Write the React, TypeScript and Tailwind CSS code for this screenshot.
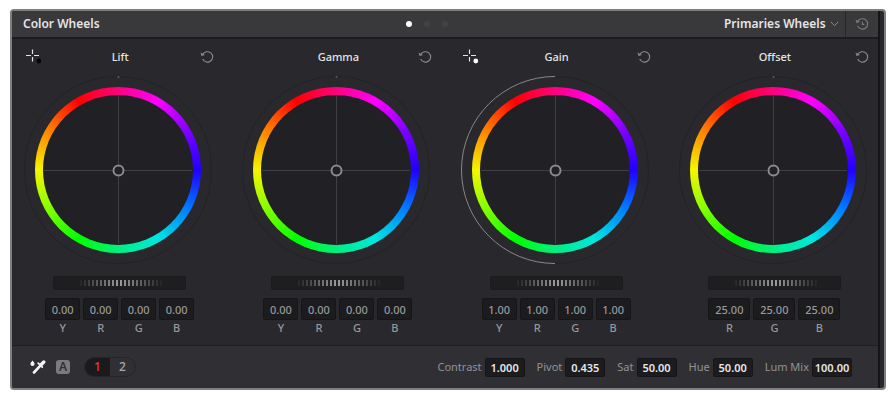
import { useState } from "react";

type Channel = { label: string; value: string };
type Wheel = {
  name: string;
  picker?: "black" | "white";
  arc?: boolean;
  channels: Channel[];
};

const yrgb = (value: string): Channel[] => ["Y", "R", "G", "B"].map((label) => ({ label, value }));

const wheels: Wheel[] = [
  { name: "Lift", picker: "black", channels: yrgb("0.00") },
  { name: "Gamma", channels: yrgb("0.00") },
  { name: "Gain", picker: "white", arc: true, channels: yrgb("1.00") },
  { name: "Offset", channels: ["R", "G", "B"].map((label) => ({ label, value: "25.00" })) },
];

const adjustments = [
  { label: "Contrast", value: "1.000" },
  { label: "Pivot", value: "0.435" },
  { label: "Sat", value: "50.00" },
  { label: "Hue", value: "50.00" },
  { label: "Lum Mix", value: "100.00" },
];

function ResetIcon({ dot = false }: { dot?: boolean }) {
  return (
    <svg width="14" height="14" viewBox="0 0 14 14" fill="none" stroke="currentColor" strokeWidth="1.1">
      <path d="M2.8 4.6A5.2 5.2 0 1 1 2.7 9" />
      <path d="M0.5 2.4 1.5 6 5 5Z" fill="currentColor" stroke="none" />
      {dot && <path d="M7.4 4.8V7.4H9.4" />}
    </svg>
  );
}

function PickerIcon({ tone }: { tone: "black" | "white" }) {
  return (
    <svg width="16" height="16" viewBox="0 0 16 16" fill="none">
      <path d="M6.5 0.5V5M6.5 8V12.5M0 6.5H5M8 6.5H13" stroke="#e4e4e6" strokeWidth="1.2" />
      <circle cx="12.8" cy="12" r="2.4" fill={tone === "black" ? "#050505" : "#ffffff"} />
    </svg>
  );
}

function EyedropperIcon() {
  return (
    <svg width="16" height="14" viewBox="0 0 16 14" fill="none">
      <path d="M2.5 0.5C3.5 1.8 4.6 2.8 4.6 4A2.1 2.1 0 0 1 0.4 4C0.4 2.8 1.5 1.8 2.5 0.5Z" fill="#f4f4f4" />
      <path d="M4 12.5 10.3 5.7" stroke="#f4f4f4" strokeWidth="2.6" strokeLinecap="round" />
      <path d="M8.2 3.2 12.3 7.2" stroke="#f4f4f4" strokeWidth="1.8" strokeLinecap="round" />
      <path d="M11.3 4.5 13.8 2" stroke="#f4f4f4" strokeWidth="3.4" strokeLinecap="round" />
    </svg>
  );
}

function WheelDial({ arc }: { arc?: boolean }) {
  return (
    <div className="relative grid size-[188px] place-items-center rounded-full border border-[#232327]">
      <div className="grid size-[166px] place-items-center rounded-full bg-[conic-gradient(#ff0080,#ff00ff_30deg,#8000ff_60deg,#2000ff_90deg,#0080ff_120deg,#00e6e0_150deg,#00f080_180deg,#00ff00_210deg,#80ff00_240deg,#f5f500_270deg,#ff8000_300deg,#ff0000_330deg,#ff0080)]">
        <div className="size-[150px] rounded-full bg-[#212125]" />
      </div>
      <svg className="absolute -inset-px" width="188" height="188" viewBox="0 0 188 188" fill="none">
        <path d="M94.5 20V88M94.5 100V168M20 94.5H88M100 94.5H168" stroke="#404044" />
        <circle cx="94.5" cy="94.5" r="5" stroke="#8b8b8d" strokeWidth="2" />
        {arc ? (
          <path d="M94 0.5A93.5 93.5 0 0 0 94 187.5" stroke="#8a8a8c" />
        ) : (
          <circle cx="94.5" cy="1" r="1" fill="#705457" />
        )}
      </svg>
    </div>
  );
}

function ValueInput({ id, value, className }: { id: string; value: string; className: string }) {
  const [text, setText] = useState(value);
  return (
    <input
      id={id}
      type="text"
      value={text}
      onChange={(event) => setText(event.target.value)}
      className={`rounded-xs border border-[#161618] bg-[#1c1c1e] text-center text-[11px] outline-none ${className}`}
    />
  );
}

function WheelColumn({ wheel }: { wheel: Wheel }) {
  const wide = wheel.channels.length === 3;
  return (
    <section className="flex min-w-0 flex-col items-center">
      <header className="grid w-48 grid-cols-3 items-center pt-2 pl-1">
        <div className="flex">
          {wheel.picker && (
            <button type="button" aria-label={`Pick ${wheel.name} point`}>
              <PickerIcon tone={wheel.picker} />
            </button>
          )}
        </div>
        <h2 className="text-center text-[11px] leading-5 font-medium text-[#e4e4e6]">{wheel.name}</h2>
        <button type="button" aria-label={`Reset ${wheel.name}`} className="justify-self-end text-[#8a8a8d]">
          <ResetIcon />
        </button>
      </header>
      <div className="mt-[9px]">
        <WheelDial arc={wheel.arc} />
      </div>
      <div className="mt-3 flex flex-col items-center pl-[3px]">
        <input
          type="range"
          aria-label={`${wheel.name} master`}
          className="h-[14px] w-[133px] appearance-none rounded-xs border border-[#1b1b1d] bg-[linear-gradient(90deg,#1e1e20_18%,transparent_50%,#1e1e20_84%),linear-gradient(#1e1e20_3px,transparent_3px,transparent_9px,#1e1e20_9px),repeating-linear-gradient(90deg,#202022_0px,#202022_2px,#9c9c9e_2px,#9c9c9e_4px)] [&::-webkit-slider-thumb]:opacity-0"
        />
        <div className="mt-2 flex gap-[3px]">
          {wheel.channels.map((channel) => {
            const id = `${wheel.name}-${channel.label}`;
            return (
              <div key={id} className="flex flex-col items-center">
                <ValueInput
                  id={id}
                  value={channel.value}
                  className={`h-[22px] font-medium text-[#98989a] ${wide ? "w-[42px]" : "w-[35px]"}`}
                />
                <label htmlFor={id} className="text-[11px] leading-4 font-medium text-[#98989a]">
                  {channel.label}
                </label>
              </div>
            );
          })}
        </div>
      </div>
    </section>
  );
}

export default function App() {
  const [page, setPage] = useState(0);
  const [tab, setTab] = useState(1);
  return (
    <div className="min-h-screen bg-white pt-[9px] pr-[5px] pl-[10px] font-['Noto_Sans','Open_Sans',sans-serif]">
      <main className="overflow-hidden rounded-[4px] border-2 border-[#7d7f80] bg-[#29292d] pr-1">
        <div className="border-r-2 border-[#151517]">
          <header className="grid h-[28px] grid-cols-3 items-center border-b-2 border-[#1c1c1f] bg-[#39393c]">
            <h1 className="pl-[11px] text-xs font-semibold text-[#e4e4e6]">Color Wheels</h1>
            <nav className="flex justify-center gap-3 pr-9">
              {[0, 1, 2].map((index) => (
                <button
                  key={index}
                  type="button"
                  aria-label={`Page ${index + 1}`}
                  onClick={() => setPage(index)}
                  className={`size-1.5 rounded-full ${page === index ? "bg-white" : "bg-[#424245]"}`}
                />
              ))}
            </nav>
            <div className="flex h-full items-center justify-end">
              <select
                aria-label="Palette mode"
                className="appearance-none bg-transparent text-xs font-semibold text-[#e4e4e6] outline-none"
              >
                <option>Primaries Wheels</option>
              </select>
              <svg className="mr-[6px] ml-1" width="9" height="6" viewBox="0 0 9 6" fill="none" stroke="#8a8a8d">
                <path d="M0.8 0.8 4.5 4.8 8.2 0.8" />
              </svg>
              <button
                type="button"
                aria-label="Reset all"
                className="grid h-full w-[33px] place-items-center border-l border-[#252528] text-[#7c7c7f]"
              >
                <ResetIcon dot />
              </button>
            </div>
          </header>

          <div className="-mr-1 -ml-[3px] grid h-[306px] grid-cols-4">
            {wheels.map((wheel) => (
              <WheelColumn key={wheel.name} wheel={wheel} />
            ))}
          </div>

          <footer className="flex h-[43px] items-center border-t border-[#1f1f22] bg-[#303034] pr-[26px] pl-[18px]">
            <button type="button" aria-label="Auto balance">
              <EyedropperIcon />
            </button>
            <button
              type="button"
              aria-label="Auto"
              className="ml-[10px] size-[14px] rounded-[3px] bg-[#7b7b7d] text-xs leading-[14px] font-semibold text-[#303034]"
            >
              A
            </button>
            <div className="ml-[14px] flex h-5 overflow-hidden rounded-full border border-[#252528] text-xs font-medium">
              {[1, 2].map((index) => (
                <button
                  key={index}
                  type="button"
                  onClick={() => setTab(index)}
                  className={`w-[25px] ${tab === index ? "bg-[#1a1a1c] text-[#e03c30]" : "text-[#a8a8aa]"}`}
                >
                  {index}
                </button>
              ))}
            </div>
            <div className="ml-auto flex items-center gap-3">
              {adjustments.map((item) => (
                <div key={item.label} className="flex items-center gap-[3px]">
                  <label htmlFor={item.label} className="text-[11px] text-[#929295]">
                    {item.label}
                  </label>
                  <ValueInput
                    id={item.label}
                    value={item.value}
                    className="h-[19px] w-10 font-semibold text-[#e6e6e8]"
                  />
                </div>
              ))}
            </div>
          </footer>
        </div>
      </main>
    </div>
  );
}
